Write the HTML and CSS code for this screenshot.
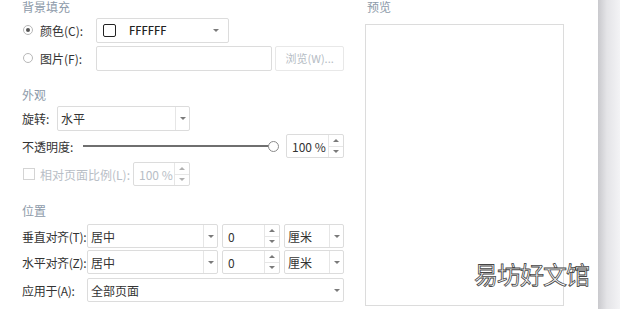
FILE: index.html
```html
<!DOCTYPE html>
<html lang="zh-CN">
   <head>
      <meta charset="UTF-8">
      <meta name="viewport" content="width=device-width, initial-scale=1.0">
      <title>背景填充</title>
      <link rel="stylesheet" href="styles.css">
   </head>
   <body>
      <div class="dialog">
         <div class="settings">
            <div class="heading">背景填充</div>
            <div class="row row-first">
               <label class="lbl lbl-fill"><span class="radio checked"></span>颜色(C):</label>
               <div class="select color-select">
                  <span class="swatch"></span>
                  <span class="select-text hex">FFFFFF</span>
                  <span class="arrow-plain"><span class="tri-down"></span></span>
               </div>
            </div>
            <div class="row">
               <label class="lbl lbl-fill"><span class="radio"></span>图片(F):</label>
               <div class="input file-input"></div>
               <div class="button disabled">浏览(W)...</div>
            </div>

            <div class="heading heading-gap">外观</div>
            <div class="row row-first">
               <label class="lbl lbl-rotate">旋转:</label>
               <div class="select rotate-select">
                  <span class="select-text">水平</span>
                  <span class="arrow"><span class="tri-down"></span></span>
               </div>
            </div>
            <div class="row">
               <label class="lbl lbl-opacity">不透明度:</label>
               <div class="slider">
                  <span class="track"></span>
                  <span class="thumb"></span>
               </div>
               <div class="spin opacity-spin">
                  <span class="spin-val">100 %</span>
                  <span class="spin-btns">
                     <span class="spin-up"><span class="tri-up"></span></span>
                     <span class="spin-down"><span class="tri-down"></span></span>
                  </span>
               </div>
            </div>
            <div class="row">
               <label class="lbl lbl-scale disabled-text"><span class="checkbox"></span>相对页面比例(L):</label>
               <div class="spin scale-spin disabled-text">
                  <span class="spin-val">100 %</span>
                  <span class="spin-btns">
                     <span class="spin-up"><span class="tri-up"></span></span>
                     <span class="spin-down"><span class="tri-down"></span></span>
                  </span>
               </div>
            </div>

            <div class="heading heading-gap">位置</div>
            <div class="row row-first2">
               <label class="lbl lbl-pos">垂直对齐(T):</label>
               <div class="select pos-select">
                  <span class="select-text">居中</span>
                  <span class="arrow"><span class="tri-down"></span></span>
               </div>
               <div class="spin pos-spin">
                  <span class="spin-val">0</span>
                  <span class="spin-btns">
                     <span class="spin-up"><span class="tri-up"></span></span>
                     <span class="spin-down"><span class="tri-down"></span></span>
                  </span>
               </div>
               <div class="select unit-select">
                  <span class="select-text">厘米</span>
                  <span class="arrow"><span class="tri-down"></span></span>
               </div>
            </div>
            <div class="row row-tight">
               <label class="lbl lbl-pos">水平对齐(Z):</label>
               <div class="select pos-select">
                  <span class="select-text">居中</span>
                  <span class="arrow"><span class="tri-down"></span></span>
               </div>
               <div class="spin pos-spin">
                  <span class="spin-val">0</span>
                  <span class="spin-btns">
                     <span class="spin-up"><span class="tri-up"></span></span>
                     <span class="spin-down"><span class="tri-down"></span></span>
                  </span>
               </div>
               <div class="select unit-select">
                  <span class="select-text">厘米</span>
                  <span class="arrow"><span class="tri-down"></span></span>
               </div>
            </div>
            <div class="row">
               <label class="lbl lbl-pos">应用于(A):</label>
               <div class="select apply-select">
                  <span class="select-text">全部页面</span>
                  <span class="arrow-plain"><span class="tri-down"></span></span>
               </div>
            </div>
         </div>

         <div class="preview">
            <div class="heading">预览</div>
            <div class="preview-box"></div>
         </div>

         <div class="edge"></div>

         <div class="watermark">易坊好文馆</div>
      </div>
   </body>
</html>
```

FILE: styles.css
```css
body {
    margin: 0;
    background: #fff;
    font-family: "Noto Sans CJK SC", "Noto Sans", sans-serif;
    font-size: 12px;
    color: #333;
}
.dialog {
    position: relative;
    display: flex;
    width: 620px;
    height: 309px;
    overflow: hidden;
}
/* left settings column */
.settings {
    width: 322px;
    padding-left: 22px;
}
.heading {
    height: 14px;
    line-height: 14px;
    color: #8d9aa9;
}
.heading-gap {
    margin-top: 18px;
}
.row {
    display: flex;
    align-items: center;
    height: 24px;
    margin-top: 4px;
}
.row-first {
    margin-top: 4px;
}
.row-first2 {
    margin-top: 6px;
}
.row-tight {
    margin-top: 2px;
}
.lbl {
    display: flex;
    align-items: center;
    flex-shrink: 0;
    white-space: nowrap;
}
.lbl-fill {
    width: 74px;
}
.lbl-rotate {
    width: 35px;
}
.lbl-opacity {
    width: 61px;
}
.lbl-scale {
    width: 111px;
}
.lbl-pos {
    width: 65px;
    letter-spacing: -0.3px;
}
.disabled-text {
    color: #b8bec6;
}
.radio {
    width: 8px;
    height: 8px;
    margin: 0 7px 0 1px;
    border: 1px solid #b8b8b8;
    border-radius: 50%;
    position: relative;
}
.radio.checked::after {
    content: "";
    position: absolute;
    left: 2px;
    top: 2px;
    width: 4px;
    height: 4px;
    border-radius: 50%;
    background: #555;
}
.checkbox {
    width: 10px;
    height: 10px;
    margin: 0 5px 0 1px;
    border: 1px solid #d4d4d4;
}
/* selects and inputs */
.select,
.input,
.spin,
.button {
    box-sizing: border-box;
    height: 24px;
    border: 1px solid #dcdcdc;
    border-radius: 2px;
    background: #fff;
}
.select {
    display: flex;
    align-items: center;
}
.select-text {
    flex: 1;
    padding-left: 3px;
}
.arrow,
.arrow-plain {
    display: flex;
    align-items: center;
    justify-content: center;
    width: 13px;
    height: 100%;
}
.arrow {
    border-left: 1px solid #e6e6e6;
}
.tri-down,
.tri-up {
    width: 0;
    height: 0;
    border-left: 3px solid transparent;
    border-right: 3px solid transparent;
}
.tri-down {
    border-top: 3px solid #7a7a7a;
}
.tri-up {
    border-bottom: 3px solid #7a7a7a;
}
.color-select {
    width: 133px;
    height: 25px;
    padding: 0 6px 0 6px;
}
.swatch {
    box-sizing: border-box;
    width: 13px;
    height: 13px;
    border: 1.5px solid #222;
    border-radius: 2px;
}
.hex {
    padding-left: 13px;
    font-size: 11px;
    font-weight: 500;
    color: #222;
}
.file-input {
    width: 177px;
    height: 25px;
}
.button {
    display: flex;
    align-items: center;
    justify-content: center;
    width: 69px;
    height: 25px;
    margin-left: 3px;
    border-color: #e8e8e8;
    font-size: 11px;
}
.button.disabled {
    color: #b5bcc4;
}
.rotate-select {
    width: 133px;
    height: 25px;
}
/* slider */
.slider {
    position: relative;
    display: flex;
    align-items: center;
    width: 196px;
    height: 12px;
    margin-right: 7px;
}
.track {
    width: 186px;
    height: 2px;
    background: #6f6f6f;
}
.thumb {
    box-sizing: border-box;
    width: 11px;
    height: 11px;
    margin-left: -1px;
    border: 1px solid #8a8a8a;
    border-radius: 50%;
    background: #fff;
}
/* spin boxes */
.spin {
    display: flex;
}
.spin-val {
    flex: 1;
    display: flex;
    align-items: center;
    padding-left: 5px;
}
.spin-btns {
    display: flex;
    flex-direction: column;
    width: 14px;
    border-left: 1px solid #e6e6e6;
}
.spin-up,
.spin-down {
    flex: 1;
    display: flex;
    align-items: center;
    justify-content: center;
}
.spin-up {
    border-bottom: 1px solid #e6e6e6;
}
.opacity-spin {
    width: 58px;
}
.scale-spin {
    width: 57px;
}
.scale-spin .tri-up {
    border-bottom-color: #b0b0b0;
}
.scale-spin .tri-down {
    border-top-color: #b0b0b0;
}
.pos-select {
    width: 131px;
}
.pos-spin {
    width: 58px;
    margin-left: 4px;
}
.unit-select {
    width: 60px;
    margin-left: 4px;
}
.apply-select {
    width: 257px;
}
/* preview column */
.preview {
    width: 200px;
    margin-left: 21px;
}
.preview .heading {
    padding-left: 2px;
}
.preview-box {
    box-sizing: border-box;
    width: 199px;
    height: 282px;
    margin-top: 10px;
    border: 1px solid #dcdcdc;
}
.edge {
    width: 22px;
    margin-left: auto;
    background: linear-gradient(to right, #c9c9cd, #e4e4e7 40%, #f3f3f5);
}
/* watermark over the corner */
.watermark {
    position: absolute;
    left: 474px;
    top: 256px;
    font-size: 24px;
    letter-spacing: -1px;
    color: #fff;
    -webkit-text-stroke: 0.8px #444;
}
```
